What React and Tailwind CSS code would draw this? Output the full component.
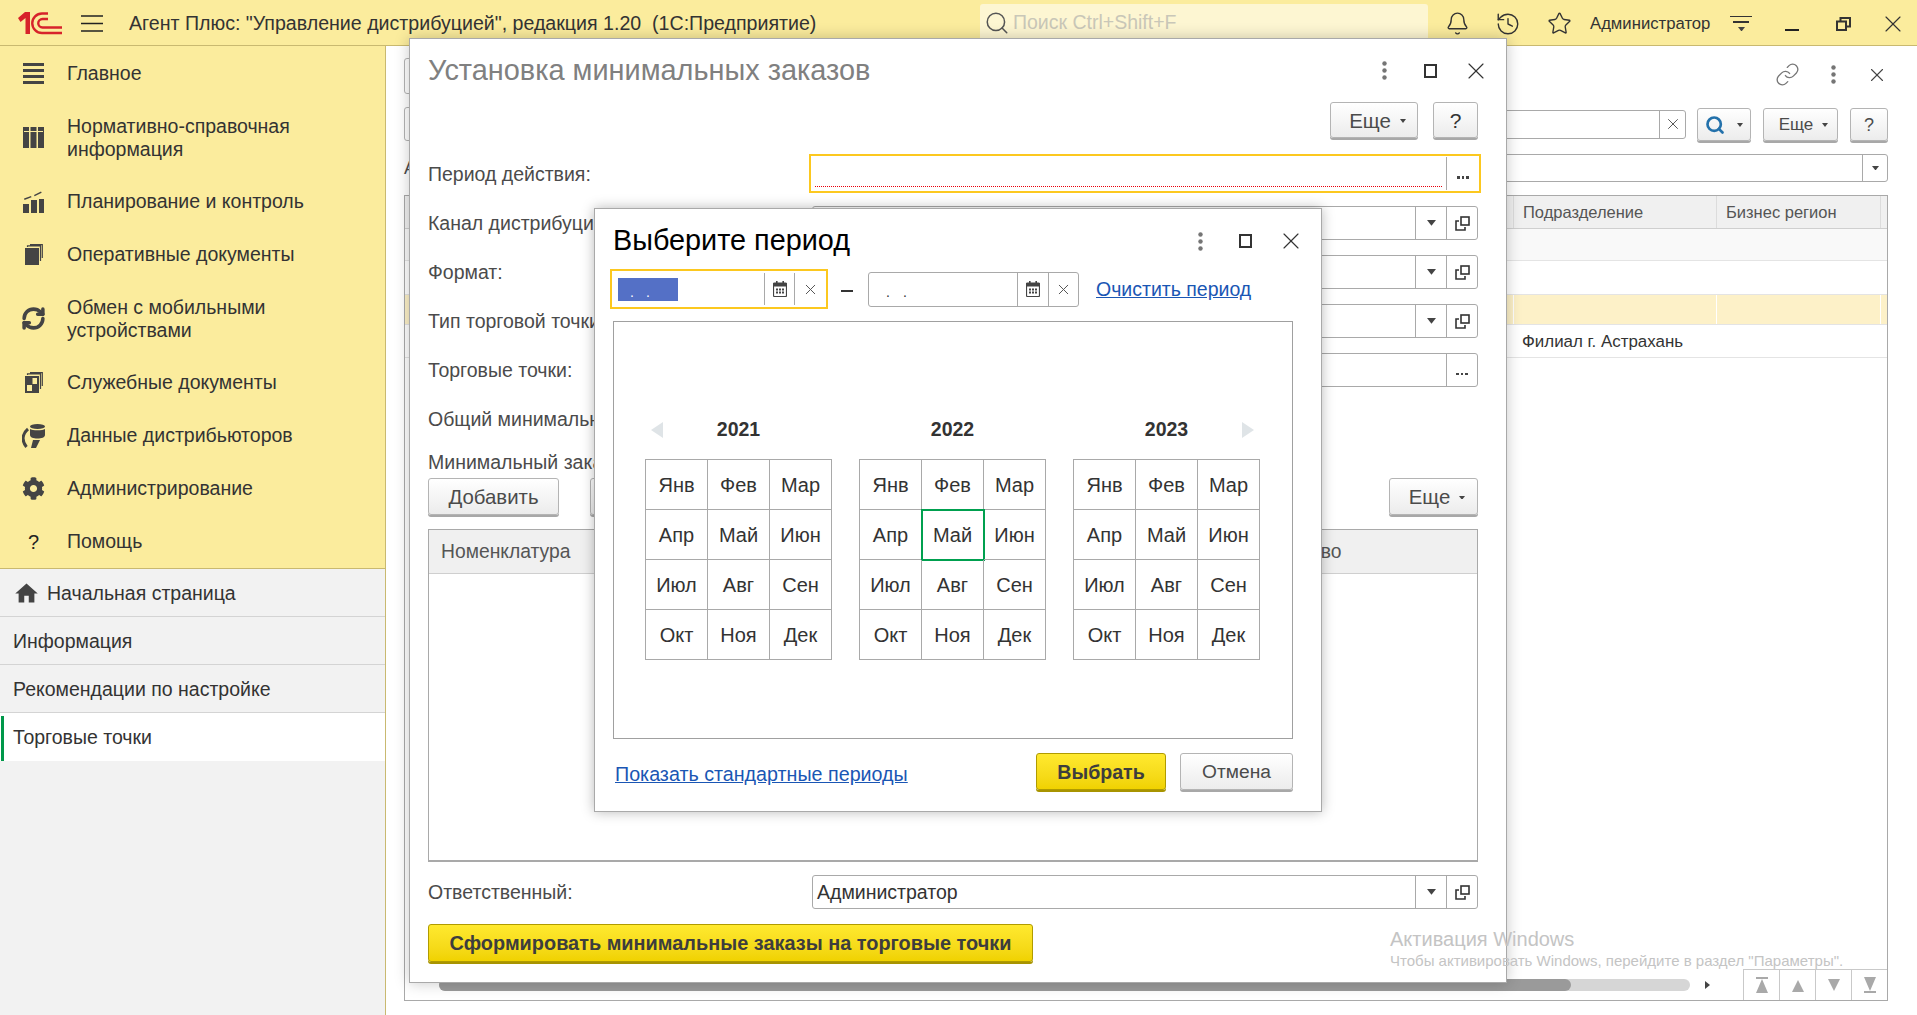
import React from 'react';
import { Bell, History, Star, Link as LinkIcon, Search, X, RefreshCw } from 'lucide-react';
import { FaCog } from 'react-icons/fa';
import { MdHome } from 'react-icons/md';

const MONTHS = ['Янв', 'Фев', 'Мар', 'Апр', 'Май', 'Июн', 'Июл', 'Авг', 'Сен', 'Окт', 'Ноя', 'Дек'];

// --- small drawings ---
const Logo1C = () => (
  <svg width="44" height="23" viewBox="0 0 44 23" fill="none">
    <path d="M0 6 7 0H12V22H7.500V6L2.500 10z" fill="#d7232b" />
    <path d="M30 1.500H24a9.500 9.500 0 0 0 0 19.500H44" stroke="#d7232b" strokeWidth="2.400" />
    <path d="M30 7H24.500a4 4 0 0 0 0 8.500H44" stroke="#d7232b" strokeWidth="2.400" />
  </svg>
);

const Burger = () => (
  <svg width="22" height="17" viewBox="0 0 22 17">
    <path d="M0 1h22M0 8.500h22M0 16h22" stroke="#222" strokeWidth="1.400" />
  </svg>
);

const IconMain = () => (
  <svg width="21" height="21" viewBox="0 0 21 21" fill="#444">
    <rect y="0" width="21" height="3" />
    <rect y="6" width="21" height="3" />
    <rect y="12" width="21" height="3" />
    <rect y="18" width="21" height="3" />
  </svg>
);

const IconRef = () => (
  <svg width="21" height="21" viewBox="0 0 21 21" fill="#444">
    <rect width="6" height="21" />
    <rect x="7.500" width="6" height="21" />
    <rect x="15" width="6" height="21" />
    <rect y="4" x="1" width="19" height="1" fill="#fbec9d" />
  </svg>
);

const IconPlan = () => (
  <svg width="21" height="22" viewBox="0 0 21 22" fill="#444">
    <rect y="13" width="6" height="9" />
    <rect x="8" y="9" width="6" height="13" />
    <rect x="16" y="8" width="5" height="14" />
    <path d="M1 7.500 8 5l.5 1.300L1.500 9zM11 4l7-3.500.7 1.300L11.600 5.300z" />
  </svg>
);

const IconDocs = () => (
  <svg width="18" height="21" viewBox="0 0 18 21" fill="none">
    <rect x="0" y="4" width="14" height="17" fill="#444" />
    <path d="M2.500 3V1.800H15.500V17M5 .7H17.300V14" stroke="#444" strokeWidth="1.200" />
  </svg>
);

const IconService = () => (
  <svg width="18" height="21" viewBox="0 0 18 21" fill="none">
    <rect x="0" y="4" width="14" height="17" fill="#444" />
    <rect x="7.500" y="6" width="4.500" height="6" fill="#fbec9d" />
    <rect x="2" y="13" width="5" height="6" fill="#fbec9d" />
    <path d="M2.500 3V1.800H15.500V17M5 .7H17.300V14" stroke="#444" strokeWidth="1.200" />
  </svg>
);

const IconDistr = () => (
  <svg width="23" height="24" viewBox="0 0 23 24" fill="#444">
    <ellipse cx="15.500" cy="2.500" rx="7.500" ry="2.500" />
    <path d="M8 5c2 1.800 13 1.800 15 0v6c0 2.500-3.500 3.500-7.500 3.500S8 13.500 8 11z" />
    <path d="M6 5C0 10-.5 17 4.500 23" fill="none" stroke="#444" strokeWidth="3" />
    <path d="M11 16h7l-4 8H9z" />
  </svg>
);

const OpenIcon = () => (
  <svg width="15" height="15" viewBox="0 0 15 15" fill="none" stroke="#333" strokeWidth="1.600">
    <rect x="6" y="1" width="8" height="8" />
    <path d="M4 5H1v9h9v-3" />
  </svg>
);

const RestoreIcon = () => (
  <svg width="15" height="14" viewBox="0 0 15 14" fill="none" stroke="#333" strokeWidth="2">
    <rect x="1" y="4.500" width="9" height="8.500" />
    <path d="M4.500 4V1H14v8.500h-3.500" />
  </svg>
);

const Caret = ({ size = 8, color = '#444' }) => (
  <svg width={size} height={size * 0.65} viewBox="0 0 8 5.200">
    <path d="M0 0h8L4 5.200z" fill={color} />
  </svg>
);

const Dots = () => (
  <svg width="5" height="19" viewBox="0 0 5 19" fill="#757575">
    <circle cx="2.500" cy="2.500" r="2.200" />
    <circle cx="2.500" cy="9.500" r="2.200" />
    <circle cx="2.500" cy="16.500" r="2.200" />
  </svg>
);

const Maximize = () => <div className="w-[13px] h-[14px] border-2 border-[#333]" />;

const Calendar = () => (
  <svg width="14" height="16" viewBox="0 0 14 16">
    <rect x="0.500" y="2" width="13" height="13.500" rx="1" fill="none" stroke="#444" strokeWidth="1.200" />
    <rect x="0.500" y="2" width="13" height="3.500" fill="#444" />
    <rect x="3" y="0" width="1.600" height="3" fill="#444" />
    <rect x="9.400" y="0" width="1.600" height="3" fill="#444" />
    <path d="M3 7.500h2v2H3zM6 7.500h2v2H6zM9 7.500h2v2H9zM3 10.500h2v2H3zM6 10.500h2v2H6zM9 10.500h2v2H9z" fill="#444" />
  </svg>
);

const Ellipsis = () => (
  <div className="flex gap-[2px] pt-[8px]">
    <span className="w-[2.500px] h-[2.500px] bg-[#444]" />
    <span className="w-[2.500px] h-[2.500px] bg-[#444]" />
    <span className="w-[2.500px] h-[2.500px] bg-[#444]" />
  </div>
);

const NavArrow = ({ d }) => (
  <svg width="16" height="18" viewBox="0 0 16 18">
    <path d={d} fill="#a9a9a9" />
  </svg>
);

// --- small widgets ---
const Btn = ({ className = '', children }) => (
  <button className={`flex items-center justify-center pt-[2px] rounded-[3px] border border-[#b4b4b4] bg-linear-to-b from-white to-[#ececec] shadow-[0_2px_0_#a8a8a8] text-[#4b4b4b] ${className}`}>
    {children}
  </button>
);

const YellowBtn = ({ className = '', children }) => (
  <button className={`flex items-center justify-center pt-[2px] rounded-[3px] border border-[#b09b00] bg-linear-to-b from-[#ffe92e] to-[#f0d200] shadow-[0_2px_0_#a89400] font-bold text-[#3d3d3d] ${className}`}>
    {children}
  </button>
);

const Slot = ({ className = '', children }) => (
  <div className={`flex items-center justify-center border-l border-[#a9a9a9] ${className}`}>{children}</div>
);

const Field = ({ children, kind = 'combo' }) => (
  <div className="flex h-[34px] rounded-[3px] border border-[#a9a9a9] bg-white">
    <div className="flex-1 flex items-center pl-[4px] pt-[2px] text-[19.500px] text-[#333]">{children}</div>
    {kind === 'combo' && (
      <>
        <Slot className="w-[31px]"><Caret size={9} /></Slot>
        <Slot className="w-[31px]"><OpenIcon /></Slot>
      </>
    )}
    {kind === 'select' && <Slot className="w-[31px]"><Ellipsis /></Slot>}
  </div>
);

const FormRow = ({ label, children, className = 'mt-[15px]' }) => (
  <div className={`grid grid-cols-[384px_1fr] items-center ${className}`}>
    <div className="pt-[2px] text-[19.500px] text-[#4b4b4b] whitespace-nowrap">{label}</div>
    {children}
  </div>
);

const SIDE = [
  { icon: <IconMain />, text: ['Главное'] },
  { icon: <IconRef />, text: ['Нормативно-справочная', 'информация'] },
  { icon: <IconPlan />, text: ['Планирование и контроль'] },
  { icon: <IconDocs />, text: ['Оперативные документы'] },
  { icon: <RefreshCw size={25} strokeWidth={3.400} color="#444" />, text: ['Обмен с мобильными', 'устройствами'] },
  { icon: <IconService />, text: ['Служебные документы'] },
  { icon: <IconDistr />, text: ['Данные дистрибьюторов'] },
  { icon: <FaCog size={23} color="#444" />, text: ['Администрирование'] },
  { icon: <span className="text-[20px] text-[#222]">?</span>, text: ['Помощь'] },
];

const TopBar = () => (
  <header className="h-[46px] shrink-0 flex items-center pt-[2px] bg-[#fbec9d] border-b border-[#c9b970]">
    <div className="ml-[18px] w-[44px] flex"><Logo1C /></div>
    <div className="ml-[19px] flex"><Burger /></div>
    <div className="ml-[26px] w-[851px] text-[19.600px] text-[#333] whitespace-nowrap">
      Агент Плюс: "Управление дистрибуцией", редакция 1.20&nbsp;&nbsp;(1С:Предприятие)
    </div>
    <div className="w-[448px] h-[38px] mt-[2px] self-start rounded-[3px] bg-[#fdf6d2] flex items-center pl-[4px]">
      <Search size={26} strokeWidth={1.400} color="#555" />
      <span className="ml-[3px] text-[19.500px] text-[#c9c7b8]">Поиск Ctrl+Shift+F</span>
    </div>
    <div className="ml-[16px] w-[26px] flex justify-center"><Bell size={25} strokeWidth={1.300} color="#333" /></div>
    <div className="ml-[25px] w-[26px] flex justify-center"><History size={26} strokeWidth={1.300} color="#333" /></div>
    <div className="ml-[25px] w-[26px] flex justify-center"><Star size={25} strokeWidth={1.300} color="#333" /></div>
    <div className="ml-[18px] w-[122px] text-[16.700px] text-[#333] whitespace-nowrap">Администратор</div>
    <div className="ml-[18px] w-[22px] flex flex-col items-center gap-[4px]">
      <span className="w-[22px] h-[1.500px] bg-[#333]" />
      <span className="w-[16px] h-[1.500px] bg-[#333]" />
      <Caret size={7} />
    </div>
    <div className="ml-[33px] w-[14px] h-[2.500px] mt-[13px] bg-[#222]" />
    <div className="ml-[37px] flex"><RestoreIcon /></div>
    <div className="ml-[28px] flex"><X size={28} strokeWidth={1} color="#333" /></div>
  </header>
);

const Sidebar = () => (
  <aside className="w-[386px] shrink-0 flex flex-col bg-[#f2f2f2] border-r border-[#c9b970]">
    <nav className="bg-[#fbec9d] pt-[1px] border-b border-[#c9b970]">
      {SIDE.map((item) => (
        <div key={item.text[0]} className={`flex items-center ${item.text.length > 1 ? 'h-[75px]' : 'h-[53px]'}`}>
          <div className="w-[67px] flex justify-center">{item.icon}</div>
          <div className="text-[19.500px] leading-[23px] text-[#333]">
            {item.text.map((t) => <div key={t}>{t}</div>)}
          </div>
        </div>
      ))}
    </nav>
    <div className="h-[48px] flex items-center pt-[2px] border-b border-[#d4d4d4] pl-[13px] text-[19.500px] text-[#333]">
      <MdHome size={27} color="#444" />
      <span className="ml-[7px]">Начальная страница</span>
    </div>
    <div className="h-[48px] flex items-center pt-[2px] border-b border-[#d4d4d4] pl-[13px] text-[19.500px] text-[#333]">Информация</div>
    <div className="h-[48px] flex items-center pt-[2px] border-b border-[#d4d4d4] pl-[13px] text-[19.500px] text-[#333]">Рекомендации по настройке</div>
    <div className="h-[48px] flex items-stretch bg-white text-[19.500px] text-[#333]">
      <div className="ml-[1px] mt-[3px] w-[3px] bg-[#00984a]" />
      <div className="pl-[9px] pt-[2px] flex items-center">Торговые точки</div>
    </div>
  </aside>
);

// the list form behind the two windows
const BackForm = () => (
  <main className="flex-1 min-w-0 flex flex-col bg-white pl-[18px] pr-[29px] pb-[14px]">
    <div className="h-[61px] flex items-start">
      <div className="mt-[12px] w-[20px] h-[36px] rounded-[3px] border border-[#b4b4b4]" />
      <div className="ml-auto mt-[16px] flex items-center">
        <LinkIcon size={25} strokeWidth={1.300} color="#777" />
        <div className="ml-[31px] flex"><Dots /></div>
        <div className="ml-[30px] flex"><X size={22} strokeWidth={1.200} color="#444" /></div>
      </div>
    </div>
    <div className="h-[34px] flex items-center">
      <div className="w-[20px] h-[34px] rounded-[3px] border border-[#b4b4b4]" />
      <div className="ml-auto flex items-center">
        <div className="w-[500px] h-[29px] flex justify-end rounded-[3px] border border-[#a9a9a9]">
          <Slot className="w-[26px]"><X size={18} strokeWidth={1.300} color="#555" /></Slot>
        </div>
        <Btn className="ml-[11px] w-[54px] h-[33px] gap-[12px]">
          <Search size={20} strokeWidth={3.200} color="#2371ab" />
          <Caret size={6} />
        </Btn>
        <Btn className="ml-[12px] w-[75px] h-[33px] gap-[9px] pl-[6px] text-[17px]">Еще <Caret size={6} /></Btn>
        <Btn className="ml-[12px] w-[38px] h-[33px] text-[18px]">?</Btn>
      </div>
    </div>
    <div className="mt-[13px] h-[28px] flex items-center">
      <span className="text-[18px] text-[#4b4b4b] w-[4px] whitespace-nowrap">А</span>
      <div className="ml-[16px] flex-1 h-[28px] flex justify-end rounded-[3px] border border-[#a9a9a9]">
        <Slot className="w-[25px]"><Caret size={7} /></Slot>
      </div>
    </div>
    <div className="mt-[13px] flex-1 flex flex-col border border-[#a9a9a9]">
      <div className="h-[33px] flex bg-[#f0f0f0] border-b border-[#cfcfcf] text-[16.500px] text-[#555]">
        <div className="flex-1" />
        <div className="w-[203px] pl-[9px] flex items-center border-l border-[#dcdcdc]">Подразделение</div>
        <div className="w-[164px] pl-[9px] flex items-center border-l border-[#dcdcdc]">Бизнес регион</div>
        <div className="w-[7px] border-l border-[#dcdcdc]" />
      </div>
      <div className="h-[32px] bg-[#f9f9f9] border-b border-[#e4e4e4]" />
      <div className="h-[34px] border-b border-[#e4e4e4]" />
      <div className="h-[30px] flex bg-[#fdf1c8] border-b border-[#e4e4e4]">
        <div className="flex-1" />
        <div className="w-[203px] border-l border-white" />
        <div className="w-[164px] border-l border-white" />
        <div className="w-[7px] border-l border-white" />
      </div>
      <div className="h-[33px] flex border-b border-[#e4e4e4] text-[16.900px] text-[#333]">
        <div className="flex-1" />
        <div className="w-[374px] pl-[9px] pt-[2px] flex items-center">Филиал г. Астрахань</div>
      </div>
      <div className="flex-1" />
      <div className="h-[31px] flex">
        <div className="flex-1 flex items-center pl-[34px]">
          <div className="w-[1251px] h-[12px] rounded-[6px] bg-[#d6d6d6]">
            <div className="w-[1132px] h-[12px] rounded-[6px] bg-[#9a9a9a]" />
          </div>
          <div className="ml-[15px] w-0 h-0 border-y-[4px] border-y-transparent border-l-[5px] border-l-[#444]" />
        </div>
        <div className="w-[144px] grid grid-cols-4 border-t border-[#c9c9c9]">
          <div className="flex items-center justify-center border-l border-[#c9c9c9]"><NavArrow d="M2 1h12v2H2zM8 3l6 14H2z" /></div>
          <div className="flex items-center justify-center border-l border-[#c9c9c9]"><NavArrow d="M8 4l6 12H2z" /></div>
          <div className="flex items-center justify-center border-l border-[#c9c9c9]"><NavArrow d="M2 3h12L8 15z" /></div>
          <div className="flex items-center justify-center border-l border-[#c9c9c9]"><NavArrow d="M2 1h12L8 15zM2 15h12v2H2z" /></div>
        </div>
      </div>
    </div>
  </main>
);

const MainWindow = () => (
  <section className="absolute left-[409px] top-[38px] w-[1098px] h-[945px] bg-white border border-[#a9a9a9] shadow-[0_0_14px_rgba(0,0,0,0.22)] pl-[18px] pr-[28px] flex flex-col">
    <div className="h-[63px] shrink-0 flex items-center -mr-[21px]">
      <h1 className="text-[28.900px] font-normal text-[#808080]">Установка минимальных заказов</h1>
      <div className="ml-auto flex items-center">
        <div className="w-[46px] flex justify-center"><Dots /></div>
        <div className="w-[46px] flex justify-center"><Maximize /></div>
        <div className="w-[46px] flex justify-center"><X size={28} strokeWidth={1} color="#333" /></div>
      </div>
    </div>
    <div className="h-[38px] shrink-0 flex justify-end gap-[15px]">
      <Btn className="w-[88px] h-[36px] gap-[9px] pl-[7px] text-[20.500px]">Еще <Caret size={6} /></Btn>
      <Btn className="w-[45px] h-[36px] text-[21px] text-[#333]">?</Btn>
    </div>
    <div className="mt-[14px] grid grid-cols-[381px_1fr] items-center">
      <div className="pt-[2px] text-[19.500px] text-[#4b4b4b]">Период действия:</div>
      <div className="h-[39px] -mr-[3px] flex border-2 border-[#fcc81f] bg-white">
        <div className="flex-1 mx-[4px] mb-[4px] border-b border-dotted border-[#e8000b]" />
        <Slot className="w-[33px] my-[1px]"><Ellipsis /></Slot>
      </div>
    </div>
    <FormRow label="Канал дистрибуции:" className="mt-[13px]"><Field /></FormRow>
    <FormRow label="Формат:"><Field /></FormRow>
    <FormRow label="Тип торговой точки:"><Field /></FormRow>
    <FormRow label="Торговые точки:"><Field kind="select" /></FormRow>
    <div className="mt-[21px] text-[19.500px] leading-[23px] text-[#4b4b4b] whitespace-nowrap">Общий минимальный заказ:</div>
    <div className="mt-[20px] text-[19.500px] leading-[23px] text-[#4b4b4b] whitespace-nowrap">Минимальный заказ:</div>
    <div className="mt-[4px] h-[37px] flex shrink-0">
      <Btn className="w-[131px] h-[37px] text-[20.400px]">Добавить</Btn>
      <Btn className="ml-[31px] w-[100px] h-[37px]" />
      <Btn className="ml-auto w-[89px] h-[37px] gap-[9px] pl-[7px] text-[20.400px]">Еще <Caret size={6} /></Btn>
    </div>
    <div className="mt-[14px] h-[333px] shrink-0 border border-[#a9a9a9] border-b-2 flex flex-col">
      <div className="h-[44px] flex items-center pt-[2px] bg-[#f0f0f0] border-b border-[#cfcfcf] text-[19.300px] text-[#555]">
        <span className="ml-[12px] w-[797px]">Номенклатура</span>
        <span>Количество</span>
      </div>
    </div>
    <FormRow label="Ответственный:" className="mt-[13px]"><Field>Администратор</Field></FormRow>
    <YellowBtn className="mt-[15px] w-[605px] h-[38px] text-[19.900px]">Сформировать минимальные заказы на торговые точки</YellowBtn>
  </section>
);

const DateField = ({ focus }) => (
  <div className={`flex bg-white ${focus ? 'w-[218px] h-[40px] border-2 border-[#fcc81f] py-[2px]' : 'w-[211px] h-[35px] rounded-[3px] border border-[#a9a9a9]'}`}>
    <div className="flex-1 flex items-center pl-[6px]">
      {focus ? (
        <div className="w-[60px] h-[23px] bg-[#5470c6] flex items-end pl-[12px] gap-[12px] pb-[4px] text-[14px] leading-[10px] text-white"><span>.</span><span>.</span></div>
      ) : (
        <div className="flex pl-[11px] gap-[13px] pt-[6px] text-[14px] text-[#333]"><span>.</span><span>.</span></div>
      )}
    </div>
    <Slot className={focus ? 'w-[30px]' : 'w-[31px]'}><Calendar /></Slot>
    <Slot className={focus ? 'w-[32px]' : 'w-[30px]'}><X size={17} strokeWidth={1.400} color="#555" /></Slot>
  </div>
);

const YearGrid = ({ selected }) => (
  <div className="w-[187px] h-[201px] grid grid-cols-3 grid-rows-4 border-t border-l border-[#a9a9a9]">
    {MONTHS.map((m) => (
      <div
        key={m}
        className={`flex items-center justify-center border-r border-b border-[#a9a9a9] text-[20px] text-[#333] ${
          selected === m ? 'outline-2 -outline-offset-1 outline-[#00a04f]' : ''
        }`}
      >
        {m}
      </div>
    ))}
  </div>
);

const PeriodDialog = () => (
  <section className="absolute left-[594px] top-[208px] w-[728px] h-[604px] bg-white border border-[#a9a9a9] shadow-[0_0_12px_rgba(0,0,0,0.28)] pl-[18px] pr-[28px] flex flex-col">
    <div className="h-[64px] shrink-0 flex items-center -mr-[20px]">
      <h2 className="text-[28.800px] font-normal text-black">Выберите период</h2>
      <div className="ml-auto flex items-center">
        <div className="w-[45px] flex justify-center"><Dots /></div>
        <div className="w-[45px] flex justify-center"><Maximize /></div>
        <div className="w-[45px] flex justify-center"><X size={28} strokeWidth={1} color="#333" /></div>
      </div>
    </div>
    <div className="-mt-[4px] flex items-center -ml-[3px]">
      <DateField focus />
      <div className="ml-[13px] w-[12px] h-[2px] mt-[4px] bg-[#333]" />
      <div className="ml-[15px]"><DateField /></div>
      <a className="ml-[17px] mt-[2px] text-[19.500px] text-[#1a56b4] underline">Очистить период</a>
    </div>
    <div className="mt-[12px] h-[418px] shrink-0 border border-[#a0a0a0] pl-[31px] pt-[93px] flex gap-[27px]">
      {[2021, 2022, 2023].map((year, i) => (
        <div key={year} className="w-[187px]">
          <div className="h-[24px] mb-[20px] grid grid-cols-[24px_1fr_24px] items-center text-center text-[19.500px] font-bold text-[#333]">
            <div className="flex justify-center">
              {i === 0 && <div className="w-0 h-0 border-y-[8px] border-y-transparent border-r-[12px] border-r-[#dfe4e7]" />}
            </div>
            <div>{year}</div>
            <div className="flex justify-center">
              {i === 2 && <div className="w-0 h-0 border-y-[8px] border-y-transparent border-l-[12px] border-l-[#dfe4e7]" />}
            </div>
          </div>
          <YearGrid selected={i === 1 ? 'Май' : null} />
        </div>
      ))}
    </div>
    <div className="mt-[14px] flex items-center">
      <a className="ml-[2px] mt-[6px] text-[19.700px] text-[#1a56b4] underline whitespace-nowrap">Показать стандартные периоды</a>
      <YellowBtn className="ml-auto w-[130px] h-[37px] text-[19.600px]">Выбрать</YellowBtn>
      <Btn className="ml-[14px] w-[113px] h-[37px] text-[19.200px]">Отмена</Btn>
    </div>
  </section>
);

export default function App() {
  return (
    <div className="relative w-[1917px] h-[1015px] overflow-hidden flex flex-col bg-white font-['Liberation_Sans',Arial,sans-serif]">
      <TopBar />
      <div className="flex-1 min-h-0 flex">
        <Sidebar />
        <BackForm />
      </div>
      <MainWindow />
      <PeriodDialog />
      {/* Windows activation watermark */}
      <div className="absolute left-[1390px] top-[927px] pointer-events-none text-[#c4c4c4]">
        <div className="text-[20px] leading-[24px]">Активация Windows</div>
        <div className="text-[15px] leading-[20px] whitespace-nowrap">Чтобы активировать Windows, перейдите в раздел "Параметры".</div>
      </div>
    </div>
  );
}
